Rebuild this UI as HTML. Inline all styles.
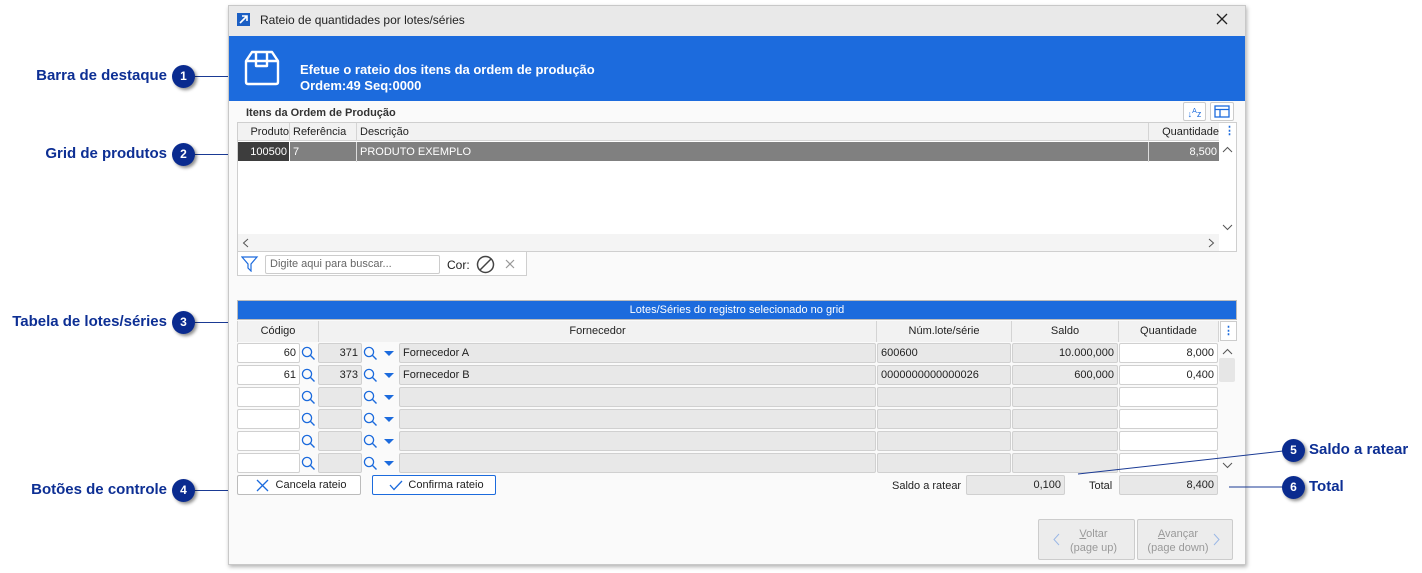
<!DOCTYPE html>
<html><head><meta charset="utf-8"><style>
*{box-sizing:border-box;margin:0;padding:0}
body{width:1422px;height:573px;background:#fff;position:relative;overflow:hidden;font-family:"Liberation Sans",sans-serif;font-size:11px;color:#222}
.a{position:absolute}
.lbl{position:absolute;font-weight:bold;font-size:15px;color:#0d2f94;white-space:nowrap}
.num{position:absolute;width:23px;height:23px;border-radius:50%;background:#0a2b8f;color:#fff;font-weight:bold;font-size:12px;text-align:center;line-height:23px;box-shadow:2px 2px 3px rgba(0,0,0,.45)}
.ln{position:absolute;height:1px;background:#1a3a94}
.cell{position:absolute;height:20px;border:1px solid #d0d0d0;border-radius:2px;line-height:19px;padding:0 3px;font-size:11px}
.w{background:#fff}
.g{background:#e8e8e8}
.r{text-align:right}
.th{position:absolute;top:321px;height:21px;background:#f2f2f2;border-right:1px solid #d4d4d4;text-align:center;line-height:21px}
.btn{position:absolute;height:20px;border:1px solid #bbb;border-radius:2px;background:#fff;line-height:18px;text-align:center}
</style></head><body>
<div class="lbl" style="right:1255px;top:67px">Barra de destaque</div>
<div class="lbl" style="right:1255px;top:145px">Grid de produtos</div>
<div class="lbl" style="right:1255px;top:313px">Tabela de lotes/séries</div>
<div class="lbl" style="right:1255px;top:481px">Botões de controle</div>
<div class="ln" style="left:190px;top:76px;width:40px"></div>
<div class="ln" style="left:190px;top:154px;width:50px"></div>
<div class="ln" style="left:190px;top:322px;width:40px"></div>
<div class="ln" style="left:190px;top:490px;width:48px"></div>
<div class="num" style="left:172px;top:65px">1</div>
<div class="num" style="left:172px;top:143px">2</div>
<div class="num" style="left:172px;top:311px">3</div>
<div class="num" style="left:172px;top:479px">4</div>

<div class="a" style="left:228px;top:5px;width:1018px;height:560px;background:#fafafa;border:1px solid #c8c8c8;box-shadow:1px 2px 4px rgba(0,0,0,.3)"></div>
<div class="a" style="left:229px;top:6px;width:1016px;height:30px;background:#e9e9e9"></div>
<div class="a" style="left:237px;top:13px;width:13px;height:13px;background:#1b5fc4"><svg width="13" height="13"><path d="M3 10 L10 3 M5 3 H10 V8" stroke="#fff" stroke-width="1.6" fill="none"/></svg></div>
<div class="a" style="left:260px;top:13px;font-size:12px">Rateio de quantidades por lotes/séries</div>
<svg class="a" style="left:1216px;top:13px" width="12" height="12"><path d="M1 1 L11 11 M11 1 L1 11" stroke="#222" stroke-width="1.3"/></svg>
<div class="a" style="left:229px;top:36px;width:1016px;height:65px;background:#1c6bdd"></div>
<svg class="a" style="left:243px;top:49px" width="38" height="38"><path d="M3 12 L9 3 H29 L35 12 V33 Q35 35 33 35 H5 Q3 35 3 33 Z M3 12 H35 M13 3 V17 H24 V3" stroke="#fff" stroke-width="2.4" fill="none" stroke-linejoin="round"/></svg>
<div class="a" style="left:300px;top:62px;color:#fff;font-weight:bold;font-size:13px;line-height:16px">Efetue o rateio dos itens da ordem de produção<br>Ordem:49 Seq:0000</div>

<div class="a" style="left:246px;top:107px;font-weight:bold;font-size:11px;color:#333">Itens da Ordem de Produção</div>
<div class="a" style="left:1183px;top:102px;width:23px;height:19px;border:1px solid #ccc;border-radius:2px;background:#fff;color:#1c6bdd;font-size:9px;text-align:center;line-height:17px">↓<sup style="font-size:7px">A</sup>z</div>
<div class="a" style="left:1210px;top:102px;width:24px;height:19px;border:1px solid #ccc;border-radius:2px;background:#fff"><svg width="22" height="17"><rect x="4" y="3" width="14" height="11" stroke="#1c6bdd" fill="none" stroke-width="1.3"/><path d="M4 6.5 H18 M9 6.5 V14" stroke="#1c6bdd" stroke-width="1.3"/></svg></div>

<div class="a" style="left:237px;top:122px;width:1000px;height:130px;background:#fff;border:1px solid #cfcfcf"></div>
<div class="a" style="left:238px;top:123px;width:981px;height:18px;background:#f2f2f2;border-bottom:1px solid #d4d4d4"></div>
<div class="a" style="left:238px;top:123px;width:51px;text-align:right;line-height:18px">Produto</div>
<div class="a" style="left:289px;top:123px;height:18px;border-left:1px solid #d4d4d4;padding-left:3px;line-height:18px">Referência</div>
<div class="a" style="left:356px;top:123px;height:18px;border-left:1px solid #d4d4d4;padding-left:3px;line-height:18px">Descrição</div>
<div class="a" style="left:1148px;top:123px;width:71px;height:18px;border-left:1px solid #d4d4d4;text-align:right;line-height:18px">Quantidade</div>
<div class="a" style="left:1224px;top:124px;color:#1c6bdd;font-weight:bold">⋮</div>
<div class="a" style="left:238px;top:142px;width:51px;height:19px;background:#3d3d3d;color:#fff;text-align:right;line-height:20px;padding-right:2px">100500</div>
<div class="a" style="left:290px;top:142px;width:929px;height:19px;background:#808080;color:#fff;line-height:20px"><span style="position:absolute;left:3px">7</span><span style="position:absolute;left:66px;border-left:1px solid #ddd;padding-left:3px">PRODUTO EXEMPLO</span><span style="position:absolute;left:858px;width:71px;border-left:1px solid #ddd;text-align:right;padding-right:2px">8,500</span></div>
<svg class="a" style="left:1222px;top:146px" width="11" height="7"><path d="M1 6 L5.5 1.5 L10 6" stroke="#555" fill="none"/></svg>
<svg class="a" style="left:1222px;top:224px" width="11" height="7"><path d="M1 1 L5.5 5.5 L10 1" stroke="#555" fill="none"/></svg>
<div class="a" style="left:238px;top:234px;width:981px;height:17px;background:#f4f4f4"></div>
<svg class="a" style="left:242px;top:238px" width="7" height="10"><path d="M6 1 L1.5 5 L6 9" stroke="#555" fill="none"/></svg>
<svg class="a" style="left:1208px;top:238px" width="7" height="10"><path d="M1 1 L5.5 5 L1 9" stroke="#555" fill="none"/></svg>
<div class="a" style="left:237px;top:252px;width:290px;height:24px;border:1px solid #cfcfcf;border-top:none;background:#fff"></div>
<svg class="a" style="left:241px;top:256px" width="18" height="16"><path d="M1 1 H16 L10 8 V15 L7 12 V8 Z" stroke="#1c6bdd" fill="none" stroke-width="1.2"/></svg>
<div class="a" style="left:265px;top:255px;width:175px;height:19px;border:1px solid #ccc;border-radius:2px;background:#fff;color:#666;padding-left:4px;line-height:17px">Digite aqui para buscar...</div>
<div class="a" style="left:447px;top:258px;font-size:12px">Cor:</div>
<svg class="a" style="left:476px;top:255px" width="19" height="19"><circle cx="9.5" cy="9.5" r="8" stroke="#444" fill="none" stroke-width="1.5"/><path d="M4 15 L15 4" stroke="#444" stroke-width="1.5"/></svg>
<svg class="a" style="left:505px;top:259px" width="10" height="10"><path d="M1 1 L9 9 M9 1 L1 9" stroke="#999" stroke-width="1.2"/></svg>

<div class="a" style="left:237px;top:300px;width:1000px;height:20px;background:#1c6bdd;border:1px solid #bbb;color:#fff;text-align:center;line-height:18px">Lotes/Séries do registro selecionado no grid</div>
<div class="a" style="left:237px;top:321px;width:982px;height:21px;background:#f2f2f2;border:1px solid #d4d4d4"></div>
<div class="th" style="left:238px;width:81px">Código</div>
<div class="th" style="left:319px;width:558px">Fornecedor</div>
<div class="th" style="left:877px;width:135px">Núm.lote/série</div>
<div class="th" style="left:1012px;width:107px">Saldo</div>
<div class="th" style="left:1119px;width:100px">Quantidade</div>
<div class="a" style="left:1220px;top:321px;width:17px;height:20px;border:1px solid #ccc;background:#fff;color:#1c6bdd;text-align:center;font-weight:bold;line-height:19px">⋮</div>
<svg class="a" style="left:1222px;top:348px" width="11" height="7"><path d="M1 6 L5.5 1.5 L10 6" stroke="#555" fill="none"/></svg>
<div class="a" style="left:1219px;top:358px;width:16px;height:24px;background:#e6e6e6;border-radius:2px"></div>
<svg class="a" style="left:1222px;top:462px" width="11" height="7"><path d="M1 1 L5.5 5.5 L10 1" stroke="#555" fill="none"/></svg>

<div id="rows"></div>
<script>
var d=[["60","371","Fornecedor A","600600","10.000,000","8,000"],["61","373","Fornecedor B","0000000000000026","600,000","0,400"],["","","","","",""],["","","","","",""],["","","","","",""],["","","","","",""]];
var h="";
var mag='<svg width="15" height="15"><circle cx="6" cy="6" r="4.6" stroke="#1c6bdd" fill="none" stroke-width="1.3"/><path d="M9.3 9.3 L13.5 13.5" stroke="#1c6bdd" stroke-width="1.4"/></svg>';
d.forEach(function(r,i){var y=343+i*22;
h+='<div class="cell w r" style="left:237px;top:'+y+'px;width:63px">'+r[0]+'</div>';
h+='<div class="a" style="left:301px;top:'+(y+3)+'px">'+mag+'</div>';
h+='<div class="cell g r" style="left:318px;top:'+y+'px;width:44px">'+r[1]+'</div>';
h+='<div class="a" style="left:363px;top:'+(y+3)+'px">'+mag+'</div>';
h+='<svg class="a" style="left:384px;top:'+(y+8)+'px" width="10" height="6"><path d="M0 0 H10 L5 5 Z" fill="#1c6bdd"/></svg>';
h+='<div class="cell g" style="left:399px;top:'+y+'px;width:477px">'+r[2]+'</div>';
h+='<div class="cell g" style="left:877px;top:'+y+'px;width:134px">'+r[3]+'</div>';
h+='<div class="cell g r" style="left:1012px;top:'+y+'px;width:106px">'+r[4]+'</div>';
h+='<div class="cell w r" style="left:1119px;top:'+y+'px;width:99px">'+r[5]+'</div>';});
document.getElementById("rows").innerHTML=h;
</script>

<div class="btn" style="left:237px;top:475px;width:124px"><svg class="a" style="left:18px;top:3px" width="13" height="13"><path d="M1 1 L12 12 M12 1 L1 12" stroke="#1c6bdd" stroke-width="1.3"/></svg><span style="padding-left:24px">Cancela rateio</span></div>
<div class="btn" style="left:372px;top:475px;width:124px;border-color:#1c6bdd"><svg class="a" style="left:16px;top:4px" width="14" height="11"><path d="M1 5 L5 9.5 L13 1" stroke="#1c6bdd" stroke-width="1.3" fill="none"/></svg><span style="padding-left:24px">Confirma rateio</span></div>
<div class="a" style="left:892px;top:480px">Saldo a ratear</div>
<div class="cell g r" style="left:966px;top:475px;width:99px">0,100</div>
<div class="a" style="left:1089px;top:480px">Total</div>
<div class="cell g r" style="left:1119px;top:475px;width:99px">8,400</div>

<div class="a" style="left:1038px;top:519px;width:97px;height:41px;border:1px solid #ccc;border-radius:2px;background:#ececec;color:#999;text-align:center;padding-top:7px;line-height:14px;padding-left:14px"><svg class="a" style="left:14px;top:13px" width="7" height="13"><path d="M6 1 L1 6.5 L6 12" stroke="#9bb8e6" fill="none"/></svg><u>V</u>oltar<br>(page up)</div>
<div class="a" style="left:1137px;top:519px;width:96px;height:41px;border:1px solid #ccc;border-radius:2px;background:#ececec;color:#999;text-align:center;padding-top:7px;line-height:14px;padding-right:14px"><svg class="a" style="right:12px;top:13px" width="7" height="13"><path d="M1 1 L6 6.5 L1 12" stroke="#9bb8e6" fill="none"/></svg><u>A</u>vançar<br>(page down)</div>

<svg class="a" style="left:0;top:0" width="1422" height="573"><path d="M1078 474 L1283 451" stroke="#1a3a94" stroke-width="1"/><path d="M1229 487 H1283" stroke="#1a3a94" stroke-width="1"/></svg>
<div class="num" style="left:1282px;top:439px">5</div>
<div class="num" style="left:1282px;top:476px">6</div>
<div class="lbl" style="left:1309px;top:441px">Saldo a ratear</div>
<div class="lbl" style="left:1309px;top:478px">Total</div>
</body></html>
